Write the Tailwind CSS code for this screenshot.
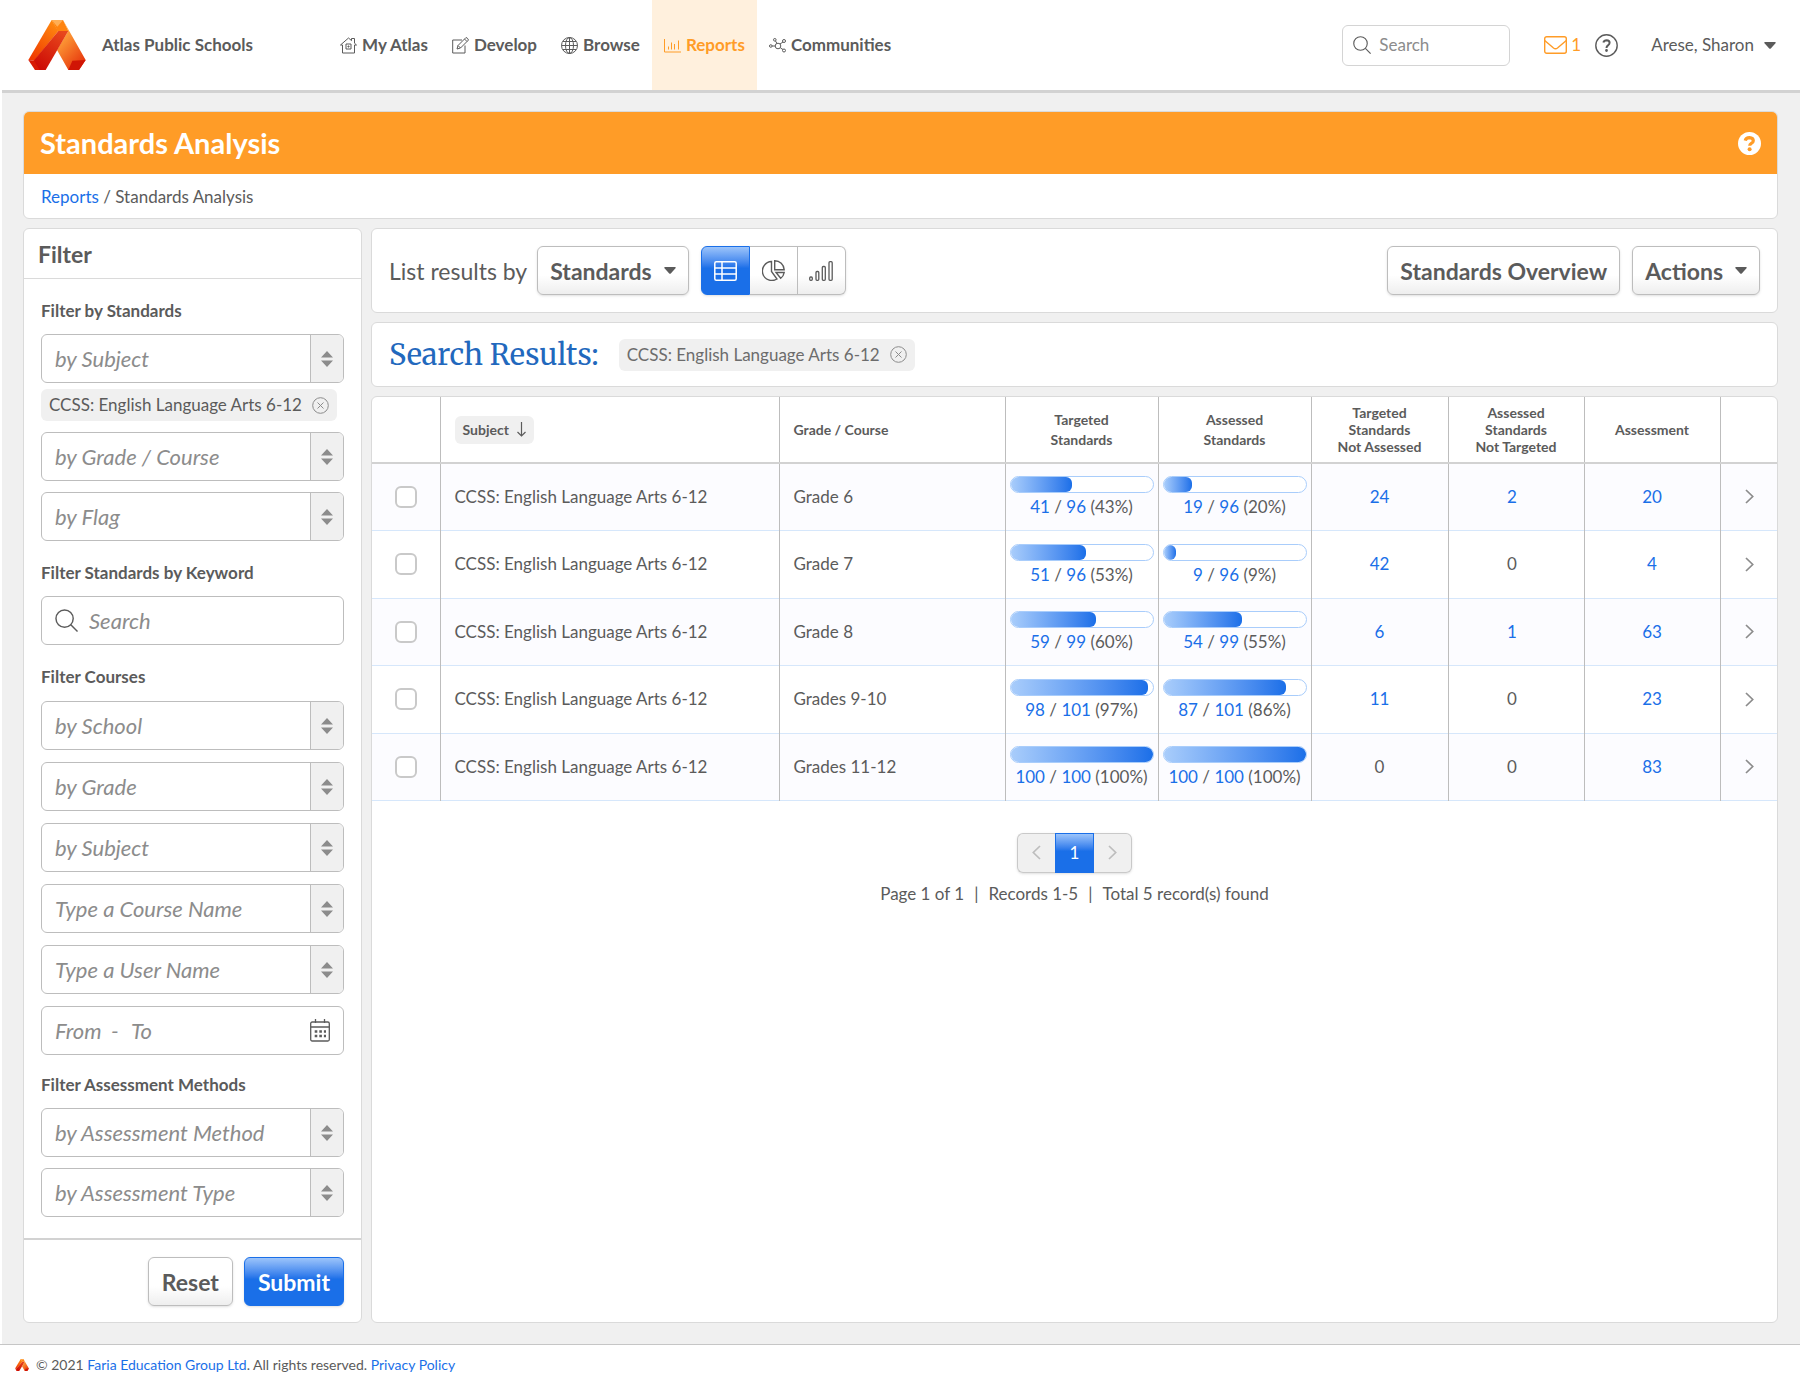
<!DOCTYPE html>
<html lang="en">
<head>
    <meta charset="UTF-8">
    <meta name="viewport" content="width=device-width, initial-scale=1.0">
    <title>Standards Analysis</title>
    <script src="https://cdn.jsdelivr.net/npm/@tailwindcss/browser@4"></script>
</head>
<body class="bg-white text-[#5b5b5b] font-['Lato',sans-serif] text-[17px] leading-6">

<!-- shared icons -->
<svg class="absolute w-0 h-0" aria-hidden="true">
    <defs>
        <linearGradient id="lgl" x1="0.8" y1="0" x2="0.2" y2="1"><stop offset="0" stop-color="#ff8a10"/><stop offset="1" stop-color="#f03a00"/></linearGradient>
        <linearGradient id="lgf" x1="0.8" y1="0" x2="0.2" y2="1"><stop offset="0" stop-color="#e8481c"/><stop offset="1" stop-color="#cc0a05"/></linearGradient>
        <linearGradient id="lgr" x1="0.2" y1="0" x2="0.8" y2="1"><stop offset="0.2" stop-color="#ffa53a"/><stop offset="1" stop-color="#e52f0a"/></linearGradient>
    </defs>
    <symbol id="logo" viewBox="0 0 172 150">
        <path fill="url(#lgr)" d="M104 0l68 120-20 30h-32L86 90l34-57z"/>
        <path fill="#ff8410" d="M70 0h34l16 33H88z"/>
        <path fill="#ffae55" d="M70 0h34L87 20z"/>
        <path fill="url(#lgl)" d="M70 0L0 120l18 2 72-89z"/>
        <path fill="url(#lgf)" d="M90 33h30L52 150H20L16 122z"/>
        <path fill="#d81a05" d="M0 120l18 2 16 28H20z"/>
        <path fill="#d01505" d="M132 122l40-2-20 30h-32z"/>
    </symbol>
    <symbol id="updown" viewBox="0 0 12 16">
        <path fill="currentColor" d="M6 0l6 6.500H0zM6 16l6-6.500H0z"/>
    </symbol>
    <symbol id="caret" viewBox="0 0 12 7">
        <path fill="currentColor" d="M1 0h10q1.200.3.5 1.300L7 6.300q-1 1-2 0L.5 1.300Q-.2.3 1 0z"/>
    </symbol>
    <symbol id="search" viewBox="0 0 24 24">
        <g fill="none" stroke="currentColor" stroke-width="1.500"><circle cx="10" cy="10" r="9"/><path d="M16.500 16.500L23.500 23.500"/></g>
    </symbol>
    <symbol id="close" viewBox="0 0 17 17">
        <g fill="none" stroke="currentColor"><circle cx="8.500" cy="8.500" r="7.800"/><path d="M5.500 5.500l6 6M11.500 5.500l-6 6"/></g>
    </symbol>
    <symbol id="right" viewBox="0 0 9 15">
        <path fill="none" stroke="currentColor" stroke-width="1.700" d="M1 1l6.700 6.500L1 14"/>
    </symbol>
</svg>

<header class="flex items-center h-[90px] pl-7 pr-6">
    <svg class="w-[58px] h-[50px] shrink-0"><use href="#logo"/></svg>
    <span class="ml-4 font-bold w-[226px] shrink-0">Atlas Public Schools</span>
    <nav class="flex h-full font-bold">
        <a href="#" class="flex items-center gap-[5px] px-3">
            <svg class="w-[17px] h-[17px]" viewBox="0 0 17 17" fill="none" stroke="currentColor"><path d="M.5 8L8.500 1l3 2.600V1.500h3v4.700L16.500 8M.5 8h2M16.500 8h-2M2.500 8v8h12V8M6 7h5v5H6zM8 9h1v1H8z"/></svg>
            My Atlas</a>
        <a href="#" class="flex items-center gap-[5px] px-3">
            <svg class="w-[17px] h-[17px]" viewBox="0 0 17 17" fill="none" stroke="currentColor"><path d="M10 3H.7v13H13V8.500M5 12l1-3.500 8-8q1.500.2 2.500 2.500l-8 8zM12.500 2l2.500 2.500M6 8.500l2.500 2.500"/></svg>
            Develop</a>
        <a href="#" class="flex items-center gap-[5px] px-3">
            <svg class="w-[17px] h-[17px]" viewBox="0 0 17 17" fill="none" stroke="currentColor"><circle cx="8.500" cy="8.500" r="8"/><ellipse cx="8.500" cy="8.500" rx="4" ry="8"/><path d="M8.500.5v16M.5 8.500h16M2 4.500h13M2 12.500h13"/></svg>
            Browse</a>
        <a href="#" class="flex items-center gap-[5px] px-3 bg-[#fff0dd] text-[#ff9c27]">
            <svg class="w-[17px] h-[17px]" viewBox="0 0 17 17" fill="none" stroke="currentColor"><path d="M.5 2v13H17M4.500 12.500V9.500M7.500 12.500V5.500M10.500 12.500V7M14.500 12.500V3.500"/></svg>
            Reports</a>
        <a href="#" class="flex items-center gap-[5px] px-3">
            <svg class="w-[17px] h-[17px]" viewBox="0 0 17 17" fill="none" stroke="currentColor"><circle cx="9" cy="9" r="2.800"/><circle cx="1.800" cy="9" r="1.300"/><circle cx="5.800" cy="2.800" r="1.300"/><circle cx="15" cy="4" r="1.500"/><circle cx="15" cy="13.500" r="1.500"/><path d="M3 9h3M6.500 4L8 6.500M11 7l3-2M11.500 11l2.500 1.500"/></svg>
            Communities</a>
    </nav>
    <div class="flex items-center ml-auto">
        <label class="flex items-center gap-2 w-[168px] h-[41px] px-[10px] border border-[#d4d4d4] rounded-md">
            <svg class="w-[18px] h-[18px] shrink-0"><use href="#search"/></svg>
            <input type="search" aria-label="Search site" placeholder="Search" class="w-full min-w-0 outline-none placeholder:text-[#8c8c8c]">
        </label>
        <a href="#" class="flex items-center gap-1 ml-[34px] text-[#ff9c27]">
            <svg class="w-[23px] h-[18px]" viewBox="0 0 23 18" fill="none" stroke="currentColor" stroke-width="1.400"><rect x=".7" y=".7" width="21.600" height="16.600" rx="2"/><path d="M.7 4.500l8.800 7.500q2 1.500 4 0l8.800-7.500"/></svg>
            1</a>
        <a href="#" aria-label="Help" class="ml-[14px]">
            <svg class="w-[23px] h-[23px]" viewBox="0 0 23 23" fill="none" stroke="currentColor" stroke-width="1.400"><circle cx="11.500" cy="11.500" r="10.700"/><path stroke-width="2" d="M8.300 8.500q.8-2.300 3.300-2.300 3 .2 3 2.600 0 1.500-1.600 2.500-1.500 1-1.500 2.600"/><circle cx="11.500" cy="16.500" r=".7"/></svg>
        </a>
        <button type="button" class="flex items-center gap-[10px] ml-[33px]">Arese, Sharon
            <svg class="w-3 h-[7px]"><use href="#caret"/></svg>
        </button>
    </div>
</header>

<main class="ml-[2px] bg-[#f0f0f0] border-t-[3px] border-[#d2d2d2] pt-[18px] pb-[21px] pl-[21px] pr-[22px]">
    <div class="bg-white border border-[#dadada] rounded-md overflow-hidden">
        <div class="flex items-center justify-between h-[62px] px-4 bg-[#ff9c27] text-white">
            <h1 class="text-[29px] leading-8 font-bold">Standards Analysis</h1>
            <a href="#" aria-label="Page help">
                <svg class="w-[23px] h-[23px]" viewBox="0 0 23 23"><circle cx="11.500" cy="11.500" r="11.500" fill="#fff"/><path fill="none" stroke="#ff9c27" stroke-width="3.200" d="M7.200 8.600q.8-3 4.300-3 3.700.2 3.800 3.100 0 1.600-2 2.700-1.600.9-1.600 2.400"/><circle cx="11.600" cy="17.200" r="2" fill="#ff9c27"/></svg>
            </a>
        </div>
        <p class="px-[17px] pt-[11px] pb-[9px]"><a href="#" class="text-[#1a6fe8]">Reports</a> / Standards Analysis</p>
    </div>

    <div class="flex gap-[9px] mt-[9px]">
        <!-- filter sidebar -->
        <form class="flex flex-col w-[339px] shrink-0 bg-white border border-[#dadada] rounded-md">
            <h2 class="px-[14px] pt-[11px] pb-[10px] border-b border-[#dadada] text-[23px] leading-7 font-bold">Filter</h2>

            <div class="flex flex-col gap-[11px] px-[17px] pt-5">
                <h3 class="font-bold">Filter by Standards</h3>
                <div>
                    <label class="flex h-[49px] border border-[#bdbdbd] rounded-md overflow-hidden">
                        <select aria-label="by Subject" class="appearance-none flex-1 min-w-0 px-[13px] italic text-[22px] leading-8 text-[#8c8c8c] outline-none"><option>by Subject</option></select>
                        <span class="flex items-center justify-center w-[33px] bg-[#f0f0f0] border-l border-[#bdbdbd] text-[#8c8c8c]"><svg class="w-3 h-4"><use href="#updown"/></svg></span>
                    </label>
                    <span class="inline-flex items-center gap-[10px] mt-[6px] h-8 px-2 rounded-md bg-[#f0f0f0] whitespace-nowrap">CCSS: English Language Arts 6-12
                        <button type="button" aria-label="Remove filter" class="text-[#8c8c8c]"><svg class="w-[17px] h-[17px]"><use href="#close"/></svg></button></span>
                </div>
                <label class="flex h-[49px] border border-[#bdbdbd] rounded-md overflow-hidden">
                    <select aria-label="by Grade / Course" class="appearance-none flex-1 min-w-0 px-[13px] italic text-[22px] leading-8 text-[#8c8c8c] outline-none"><option>by Grade / Course</option></select>
                    <span class="flex items-center justify-center w-[33px] bg-[#f0f0f0] border-l border-[#bdbdbd] text-[#8c8c8c]"><svg class="w-3 h-4"><use href="#updown"/></svg></span>
                </label>
                <label class="flex h-[49px] border border-[#bdbdbd] rounded-md overflow-hidden">
                    <select aria-label="by Flag" class="appearance-none flex-1 min-w-0 px-[13px] italic text-[22px] leading-8 text-[#8c8c8c] outline-none"><option>by Flag</option></select>
                    <span class="flex items-center justify-center w-[33px] bg-[#f0f0f0] border-l border-[#bdbdbd] text-[#8c8c8c]"><svg class="w-3 h-4"><use href="#updown"/></svg></span>
                </label>
            </div>

            <div class="flex flex-col gap-[11px] px-[17px] pt-5">
                <h3 class="font-bold">Filter Standards by Keyword</h3>
                <label class="flex items-center gap-[11px] h-[49px] px-[13px] border border-[#bdbdbd] rounded-md">
                    <svg class="w-[23px] h-[23px] shrink-0"><use href="#search"/></svg>
                    <input type="search" aria-label="Keyword" placeholder="Search" class="w-full min-w-0 italic text-[22px] leading-8 outline-none placeholder:text-[#8c8c8c]">
                </label>
            </div>

            <div class="flex flex-col gap-3 px-[17px] pt-5">
                <h3 class="font-bold">Filter Courses</h3>
                <label class="flex h-[49px] border border-[#bdbdbd] rounded-md overflow-hidden">
                    <select aria-label="by School" class="appearance-none flex-1 min-w-0 px-[13px] italic text-[22px] leading-8 text-[#8c8c8c] outline-none"><option>by School</option></select>
                    <span class="flex items-center justify-center w-[33px] bg-[#f0f0f0] border-l border-[#bdbdbd] text-[#8c8c8c]"><svg class="w-3 h-4"><use href="#updown"/></svg></span>
                </label>
                <label class="flex h-[49px] border border-[#bdbdbd] rounded-md overflow-hidden">
                    <select aria-label="by Grade" class="appearance-none flex-1 min-w-0 px-[13px] italic text-[22px] leading-8 text-[#8c8c8c] outline-none"><option>by Grade</option></select>
                    <span class="flex items-center justify-center w-[33px] bg-[#f0f0f0] border-l border-[#bdbdbd] text-[#8c8c8c]"><svg class="w-3 h-4"><use href="#updown"/></svg></span>
                </label>
                <label class="flex h-[49px] border border-[#bdbdbd] rounded-md overflow-hidden">
                    <select aria-label="Course by Subject" class="appearance-none flex-1 min-w-0 px-[13px] italic text-[22px] leading-8 text-[#8c8c8c] outline-none"><option>by Subject</option></select>
                    <span class="flex items-center justify-center w-[33px] bg-[#f0f0f0] border-l border-[#bdbdbd] text-[#8c8c8c]"><svg class="w-3 h-4"><use href="#updown"/></svg></span>
                </label>
                <label class="flex h-[49px] border border-[#bdbdbd] rounded-md overflow-hidden">
                    <input type="text" aria-label="Course name" placeholder="Type a Course Name" class="flex-1 min-w-0 px-[13px] italic text-[22px] outline-none placeholder:text-[#8c8c8c]">
                    <span class="flex items-center justify-center w-[33px] bg-[#f0f0f0] border-l border-[#bdbdbd] text-[#8c8c8c]"><svg class="w-3 h-4"><use href="#updown"/></svg></span>
                </label>
                <label class="flex h-[49px] border border-[#bdbdbd] rounded-md overflow-hidden">
                    <input type="text" aria-label="User name" placeholder="Type a User Name" class="flex-1 min-w-0 px-[13px] italic text-[22px] outline-none placeholder:text-[#8c8c8c]">
                    <span class="flex items-center justify-center w-[33px] bg-[#f0f0f0] border-l border-[#bdbdbd] text-[#8c8c8c]"><svg class="w-3 h-4"><use href="#updown"/></svg></span>
                </label>
                <div class="flex items-center h-[49px] px-[13px] border border-[#bdbdbd] rounded-md italic text-[22px] text-[#8c8c8c]">
                    <input type="text" aria-label="From date" placeholder="From" class="w-14 outline-none placeholder:text-[#8c8c8c]">
                    <span class="w-5">-</span>
                    <input type="text" aria-label="To date" placeholder="To" class="flex-1 min-w-0 outline-none placeholder:text-[#8c8c8c]">
                    <svg class="w-5 h-[23px] text-[#5b5b5b]" viewBox="0 0 20 23" fill="none" stroke="currentColor" stroke-width="1.300"><rect x=".7" y="3" width="18.600" height="19" rx="1.500"/><path d="M.7 8h18.600M5.500 0v4M14.500 0v4"/><path stroke-width="2.600" stroke-dasharray="2.600 2" d="M4.700 12.500H16M4.700 17H16"/></svg>
                </div>
            </div>

            <div class="flex flex-col gap-[11px] px-[17px] pt-[18px]">
                <h3 class="font-bold">Filter Assessment Methods</h3>
                <label class="flex h-[49px] border border-[#bdbdbd] rounded-md overflow-hidden">
                    <select aria-label="by Assessment Method" class="appearance-none flex-1 min-w-0 px-[13px] italic text-[22px] leading-8 text-[#8c8c8c] outline-none"><option>by Assessment Method</option></select>
                    <span class="flex items-center justify-center w-[33px] bg-[#f0f0f0] border-l border-[#bdbdbd] text-[#8c8c8c]"><svg class="w-3 h-4"><use href="#updown"/></svg></span>
                </label>
                <label class="flex h-[49px] border border-[#bdbdbd] rounded-md overflow-hidden">
                    <select aria-label="by Assessment Type" class="appearance-none flex-1 min-w-0 px-[13px] italic text-[22px] leading-8 text-[#8c8c8c] outline-none"><option>by Assessment Type</option></select>
                    <span class="flex items-center justify-center w-[33px] bg-[#f0f0f0] border-l border-[#bdbdbd] text-[#8c8c8c]"><svg class="w-3 h-4"><use href="#updown"/></svg></span>
                </label>
            </div>

            <div class="flex justify-end gap-[11px] mt-[21px] px-[17px] pt-[17px] pb-4 border-t-2 border-[#d2d2d2] text-[23px] font-bold">
                <button type="reset" class="h-[49px] px-[13px] border border-[#bdbdbd] rounded-md bg-linear-to-b from-white from-60% to-[#eeeeee] shadow">Reset</button>
                <button type="submit" class="h-[49px] px-[13px] border border-[#1a6fe8] rounded-md bg-linear-to-b from-[#9cc4fa] to-[#1a6fe8] to-45% text-white shadow">Submit</button>
            </div>
        </form>

        <!-- results -->
        <div class="flex flex-col flex-1 min-w-0 gap-[9px]">
            <section class="flex items-center px-[17px] py-[17px] bg-white border border-[#dadada] rounded-md text-[23px] whitespace-nowrap">
                <label for="listby">List results by</label>
                <button type="button" id="listby" class="flex items-center gap-3 h-[49px] ml-[10px] px-3 border border-[#bdbdbd] rounded-md bg-linear-to-b from-white from-60% to-[#eeeeee] shadow font-bold">Standards
                    <svg class="w-3 h-[7px]"><use href="#caret"/></svg></button>
                <div class="flex h-[49px] ml-3 rounded-md shadow">
                    <button type="button" aria-label="Table" class="flex items-center justify-center w-[49px] border border-[#1a6fe8] rounded-l-md bg-linear-to-b from-[#9cc4fa] to-[#1a6fe8] to-45% text-white">
                        <svg class="w-[23px] h-5" viewBox="0 0 23 20" fill="none" stroke="currentColor" stroke-width="1.500"><rect x=".8" y=".8" width="21.400" height="18.400" rx="1.500"/><path d="M8 1v18M1 7h21M1 13h21"/></svg></button>
                    <button type="button" aria-label="Pie chart" class="flex items-center justify-center w-12 border-y border-r border-[#bdbdbd] bg-linear-to-b from-white from-60% to-[#eeeeee]">
                        <svg class="w-[23px] h-[21px]" viewBox="0 0 23 21" fill="none" stroke="currentColor" stroke-width="1.400"><path d="M9.500 1.500A9.500 9.500 0 1 0 15 19l-5.500-7.500zM12.700.7v9h9.500A9.500 9.500 0 0 0 12.700.7zM14 12.500h8.200a9 9 0 0 1-3.500 5.800z"/></svg></button>
                    <button type="button" aria-label="Bar chart" class="flex items-center justify-center w-12 border-y border-r border-[#bdbdbd] rounded-r-md bg-linear-to-b from-white from-60% to-[#eeeeee]">
                        <svg class="w-6 h-5" viewBox="0 0 24 20" fill="none" stroke="currentColor" stroke-width="1.300"><rect x=".7" y="16" width="2.600" height="3.300" rx="1"/><rect x="7" y="10.500" width="2.800" height="8.800" rx="1"/><rect x="13.300" y="5.500" width="3" height="13.800" rx="1"/><rect x="20" y=".7" width="3.200" height="18.600" rx="1"/></svg></button>
                </div>
                <button type="button" class="h-[49px] ml-auto px-3 border border-[#bdbdbd] rounded-md bg-linear-to-b from-white from-60% to-[#eeeeee] shadow font-bold">Standards Overview</button>
                <button type="button" class="flex items-center gap-3 h-[49px] ml-3 px-3 border border-[#bdbdbd] rounded-md bg-linear-to-b from-white from-60% to-[#eeeeee] shadow font-bold">Actions
                    <svg class="w-3 h-[7px]"><use href="#caret"/></svg></button>
            </section>

            <section class="flex items-center h-[65px] px-[17px] bg-white border border-[#dadada] rounded-md">
                <h2 class="font-['Merriweather','Noto_Serif','Liberation_Serif',serif] text-[29px] text-[#2268bd] whitespace-nowrap">Search Results:</h2>
                <span class="inline-flex items-center gap-[10px] ml-5 h-8 px-2 rounded-md bg-[#f0f0f0] text-[#6c6c6c] whitespace-nowrap">CCSS: English Language Arts 6-12
                    <button type="button" aria-label="Remove filter" class="text-[#8c8c8c]"><svg class="w-[17px] h-[17px]"><use href="#close"/></svg></button></span>
            </section>

            <section class="flex-1 bg-white border border-[#dadada] rounded-md overflow-hidden">
                <table class="w-full table-fixed border-collapse text-center">
                    <thead>
                        <tr class="h-[66px] border-b-2 border-[#d2d2d2] text-sm leading-[17px]">
                            <th class="w-[68px]"></th>
                            <th class="w-[339px] border-l border-[#bdbdbd] px-[14px] text-left">
                                <button type="button" class="inline-flex items-center gap-2 h-7 px-2 rounded-md bg-[#f0f0f0] font-bold">Subject
                                    <svg class="w-[9px] h-[15px]" viewBox="0 0 9 15" fill="none" stroke="currentColor" stroke-width="1.200"><path d="M4.500 0v14M.5 10l4 4 4-4"/></svg></button></th>
                            <th class="w-[226px] border-l border-[#bdbdbd] px-[14px] text-left">Grade / Course</th>
                            <th class="w-[153px] border-l border-[#bdbdbd] leading-5">Targeted<br>Standards</th>
                            <th class="w-[153px] border-l border-[#bdbdbd] leading-5">Assessed<br>Standards</th>
                            <th class="w-[137px] border-l border-[#bdbdbd]">Targeted<br>Standards<br>Not Assessed</th>
                            <th class="w-[136px] border-l border-[#bdbdbd]">Assessed<br>Standards<br>Not Targeted</th>
                            <th class="w-[136px] border-l border-[#bdbdbd]">Assessment</th>
                            <th class="w-[58px] border-l border-[#bdbdbd]"></th>
                        </tr>
                    </thead>
                    <tbody id="results"></tbody>
                </table>

                <nav aria-label="Pagination" class="flex justify-center mt-8">
                    <div class="flex h-10 rounded-md shadow-sm">
                        <button type="button" aria-label="Previous page" class="flex items-center justify-center w-[38px] border-y border-l border-[#c9c9c9] rounded-l-md bg-[#f0f0f0] text-[#bdbdbd]"><svg class="w-[9px] h-[15px] rotate-180"><use href="#right"/></svg></button>
                        <button type="button" class="w-[39px] border border-[#1a6fe8] bg-linear-to-b from-[#9cc4fa] to-[#1a6fe8] to-45% text-white">1</button>
                        <button type="button" aria-label="Next page" class="flex items-center justify-center w-[38px] border-y border-r border-[#c9c9c9] rounded-r-md bg-[#f0f0f0] text-[#bdbdbd]"><svg class="w-[9px] h-[15px]"><use href="#right"/></svg></button>
                    </div>
                </nav>
                <p class="flex justify-center gap-[10px] mt-[9px]"><span>Page 1 of 1</span><span>|</span><span>Records 1-5</span><span>|</span><span>Total 5 record(s) found</span></p>
            </section>
        </div>
    </div>
</main>

<footer class="flex items-center gap-[7px] border-t border-[#c6c6c6] px-[15px] py-[10px] text-sm">
    <svg class="w-[14px] h-3"><use href="#logo"/></svg>
    <p>© 2021 <a href="#" class="text-[#1a6fe8]">Faria Education Group Ltd</a>. All rights reserved. <a href="#" class="text-[#1a6fe8]">Privacy Policy</a></p>
</footer>

<script>
    // targeted and assessed are [count, total, percent]
    const rows = [
        { grade: 'Grade 6', targeted: [41, 96, 43], assessed: [19, 96, 20], counts: [24, 2, 20] },
        { grade: 'Grade 7', targeted: [51, 96, 53], assessed: [9, 96, 9], counts: [42, 0, 4] },
        { grade: 'Grade 8', targeted: [59, 99, 60], assessed: [54, 99, 55], counts: [6, 1, 63] },
        { grade: 'Grades 9-10', targeted: [98, 101, 97], assessed: [87, 101, 86], counts: [11, 0, 23] },
        { grade: 'Grades 11-12', targeted: [100, 100, 100], assessed: [100, 100, 100], counts: [0, 0, 83] },
    ];

    function progress([n, total, pct]) {
        return `<td class="border-l border-[#bdbdbd] px-1">
            <div class="h-[17px] border border-[#a9cdfb] rounded-full overflow-hidden bg-white">
                <div class="h-full rounded-r-md bg-linear-to-r from-[#a9cdfb] to-[#1a6fe8]" style="width:${pct}%"></div>
            </div>
            <div class="mt-1 whitespace-nowrap leading-5"><a href="#" class="text-[#1a6fe8]">${n}</a> / <a href="#" class="text-[#1a6fe8]">${total}</a> (${pct}%)</div>
        </td>`;
    }

    function count(n, i) {
        const value = n ? `<a href="#" class="text-[#1a6fe8]">${n}</a>` : n;
        return `<td class="border-l border-[#bdbdbd] ${i === 1 ? 'pr-2' : ''}">${value}</td>`;
    }

    document.getElementById('results').innerHTML = rows.map(row => `
        <tr class="h-[67px] even:h-[68px] border-b border-b-[#d6e7fb] odd:bg-[#fcfcff]">
            <td><input type="checkbox" aria-label="Select ${row.grade}" class="appearance-none block mx-auto w-[22px] h-[22px] border-2 border-[#c9c9c9] rounded-md bg-white"></td>
            <td class="border-l border-[#bdbdbd] px-[14px] text-left">CCSS: English Language Arts 6-12</td>
            <td class="border-l border-[#bdbdbd] px-[14px] text-left">${row.grade}</td>
            ${progress(row.targeted)}
            ${progress(row.assessed)}
            ${row.counts.map(count).join('')}
            <td class="border-l border-[#bdbdbd]"><a href="#" aria-label="Open ${row.grade}" class="block w-[9px] mx-auto text-[#8c8c8c]"><svg class="w-[9px] h-[15px]"><use href="#right"/></svg></a></td>
        </tr>`).join('');
</script>
</body>
</html>
